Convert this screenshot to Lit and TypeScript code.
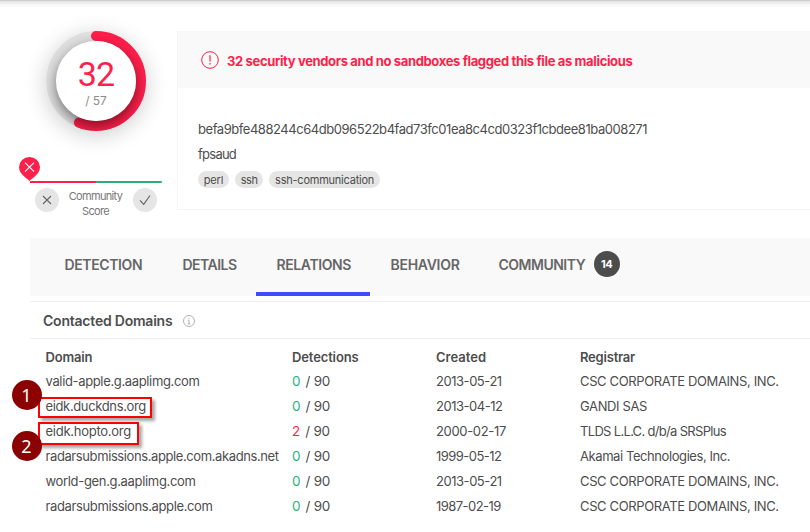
import { LitElement, html, css, nothing } from "lit";
import { customElement } from "lit/decorators.js";
import { styleMap } from "lit/directives/style-map.js";

// A label and its letter spacing in px.
type Label = [text: string, tracking: number];

interface DomainRow {
  domain: Label;
  hits: number;
  created: Label;
  registrar: Label;
}

const label = ([text, tracking]: Label, name = "label") =>
  html`<span class=${name} style=${styleMap({ letterSpacing: `${tracking}px` })}>${text}</span>`;

const TABS: Label[] = [
  ["DETECTION", -0.38],
  ["DETAILS", -0.52],
  ["RELATIONS", -0.4],
  ["BEHAVIOR", -0.28],
  ["COMMUNITY", -0.5],
];

const CHIPS: Label[] = [["perl", -0.2], ["ssh", -0.45], ["ssh-communication", -0.23]];

const HEADERS: Label[] = [
  ["Domain", -0.2],
  ["Detections", -0.13],
  ["Created", 0],
  ["Registrar", -0.21],
];

const CSC: Label = ["CSC CORPORATE DOMAINS, INC.", -0.37];

const ROWS: DomainRow[] = [
  { domain: ["valid-apple.g.aaplimg.com", -0.35], hits: 0, created: ["2013-05-21", -0.46], registrar: CSC },
  { domain: ["eidk.duckdns.org", -0.36], hits: 0, created: ["2013-04-12", -0.48], registrar: ["GANDI SAS", -0.37] },
  { domain: ["eidk.hopto.org", -0.26], hits: 2, created: ["2000-02-17", -0.33], registrar: ["TLDS L.L.C. d/b/a SRSPlus", -0.68] },
  { domain: ["radarsubmissions.apple.com.akadns.net", -0.4], hits: 0, created: ["1999-05-12", -0.53], registrar: ["Akamai Technologies, Inc.", -0.42] },
  { domain: ["world-gen.g.aaplimg.com", -0.33], hits: 0, created: ["2013-05-21", -0.46], registrar: CSC },
  { domain: ["radarsubmissions.apple.com", -0.37], hits: 0, created: ["1987-02-19", -0.55], registrar: CSC },
];

@customElement("score-card")
class ScoreCard extends LitElement {
  static styles = css`
    :host { display: block; width: 132px; text-align: center; color: #777; }
    .dial {
      position: relative; width: 100px; height: 100px; margin: 0 auto; border-radius: 50%;
      box-shadow: 0 4px 22px rgba(0, 0, 0, 0.2);
    }
    .ring { display: block; }
    .face {
      position: absolute; inset: 10px; border-radius: 50%; background: #fff;
      display: flex; flex-direction: column; align-items: center;
    }
    .count { font: 400 34px/34px Roboto, sans-serif; letter-spacing: -0.8px; color: #ff1f4b; margin-top: 16px; }
    .total { font-size: 12px; line-height: 16px; letter-spacing: -0.1px; color: #8c8c8c; margin-top: 2px; }
    .meter { position: relative; display: flex; margin-top: 50px; }
    .bar { flex: 1; height: 2px; }
    .bad { background: #ff1f4b; }
    .good { background: #26b179; border-radius: 0 1px 1px 0; }
    .pin { position: absolute; left: -11px; bottom: 2px; }
    .votes { display: flex; justify-content: space-between; padding: 5px 5px 0; }
    .vote { width: 24px; height: 24px; border-radius: 50%; background: #e5e5e5; }
    .caption { font-size: 11px; line-height: 15px; letter-spacing: -0.68px; padding-top: 0.5px; margin-left: -1px; }
    svg { display: block; }
  `;

  render() {
    const circumference = 2 * Math.PI * 45;
    const arc = (circumference * 32) / 57;
    return html`
      <div class="dial">
        <svg class="ring" width="100" height="100" viewBox="0 0 100 100">
          <defs>
            <clipPath id="disc"><circle cx="50" cy="50" r="50" /></clipPath>
            <filter id="soft" x="-50%" y="-50%" width="200%" height="200%"><feGaussianBlur stdDeviation="6.5" /></filter>
          </defs>
          <circle cx="50" cy="50" r="45" fill="none" stroke="#dfdfdf" stroke-width="10" />
          <circle cx="50" cy="50" r="45" fill="none" stroke="#ff1f4b" stroke-width="10" stroke-linecap="round"
            stroke-dasharray="${arc} ${circumference}" transform="rotate(-90 50 50)" />
          <g clip-path="url(#disc)"><circle cx="50" cy="55" r="40" fill="#000" opacity="0.5" filter="url(#soft)" /></g>
        </svg>
        <div class="face"><span class="count">32</span><span class="total">/ 57</span></div>
      </div>
      <div class="meter">
        <div class="bar bad"></div>
        <div class="bar good"></div>
        <svg class="pin" width="21" height="24" viewBox="0 0 21 24">
          <path d="M10.5 24C8.5 21.5 0 17 0 10.2a10.5 10.2 0 0 1 21 0C21 17 12.5 21.5 10.5 24Z" fill="#ff1f4b" />
          <path d="M6 5.7l9 9M15 5.7l-9 9" fill="none" stroke="#fff" stroke-width="1.1" />
        </svg>
      </div>
      <div class="votes">
        <svg class="vote" viewBox="0 0 24 24" fill="none" stroke="#666" stroke-width="1.1"><path d="M8 8l8 8M16 8l-8 8" /></svg>
        <div class="caption">Community<br />Score</div>
        <svg class="vote" viewBox="0 0 24 24" fill="none" stroke="#666" stroke-width="1.2"><path d="M7 12.3l3.7 4L17 7.5" /></svg>
      </div>
    `;
  }
}

@customElement("file-summary")
class FileSummary extends LitElement {
  static styles = css`
    :host { display: block; box-sizing: border-box; height: 179px; border: 1px solid #f4f4f4; border-width: 0 0 1px 1px; }
    .alert {
      display: flex; align-items: center; gap: 8px; height: 57px; padding-left: 23px;
      background: #f9f9f9; color: #ff1f4b; font-weight: 700; white-space: nowrap;
    }
    .icon { margin-top: 1px; }
    .text { margin-top: 2px; }
    .info { padding: 29px 0 0 20px; line-height: 25px; color: #4d4d4d; white-space: nowrap; }
    .line { height: 24.5px; }
    .chips { display: flex; gap: 6px; margin-top: 5px; font-size: 11px; line-height: 17px; }
    .chip { height: 17px; padding: 0 5.8px; border-radius: 9px; background: #e5e5e5; }
    .chip .label { display: block; line-height: 19px; }
  `;

  render() {
    return html`
      <div class="alert">
        <svg class="icon" width="18" height="18" viewBox="0 0 18 18" fill="none" stroke="#ff1f4b">
          <circle cx="9" cy="9" r="8.3" /><path d="M9 4.2v6.2M9 12v1.5" stroke-width="1.2" />
        </svg>
        ${label(["32 security vendors and no sandboxes flagged this file as malicious", -0.36], "text")}
      </div>
      <div class="info">
        <div class="line">${label(["befa9bfe488244c64db096522b4fad73fc01ea8c4cd0323f1cbdee81ba008271", -0.45])}</div>
        <div class="line">${label(["fpsaud", -0.75])}</div>
        <div class="chips">${CHIPS.map((c) => html`<div class="chip">${label(c)}</div>`)}</div>
      </div>
    `;
  }
}

@customElement("tab-strip")
class TabStrip extends LitElement {
  static styles = css`
    :host {
      display: flex; height: 58px; padding-left: 13px; background: #f9f9f9; color: #666;
      font-size: 14px; font-weight: 600; white-space: nowrap;
    }
    .tab {
      display: flex; align-items: flex-start; gap: 8.5px; box-sizing: border-box; height: 58px;
      padding: 13px 19.8px 0 20.5px; border-bottom: 4px solid transparent; line-height: 28px;
    }
    .tab:nth-child(1) { width: 118px; padding-left: 21.5px; }
    .tab:nth-child(2) { width: 95px; padding-left: 21.5px; }
    .tab:nth-child(3) { width: 114px; }
    .tab:nth-child(4) { width: 108px; }
    .current { border-color: #3b4efd; }
    .badge {
      width: 26px; height: 26px; border-radius: 50%; background: #4d4d4d; color: #fff;
      font-size: 11px; font-weight: 700; line-height: 26px; text-align: center; letter-spacing: -0.4px;
    }
  `;

  render() {
    return html`${TABS.map(
      (tab, i) => html`<div class=${i === 2 ? "tab current" : "tab"}>
        ${label(tab)}${i === 4 ? html`<span class="badge">14</span>` : nothing}
      </div>`,
    )}`;
  }
}

@customElement("domain-table")
class DomainTable extends LitElement {
  static styles = css`
    :host { display: block; margin-top: 5px; border-top: 1px solid #eee; color: #4d4d4d; white-space: nowrap; }
    .title {
      display: flex; align-items: center; gap: 11px; height: 36px; padding-left: 13px;
      border-bottom: 1px solid #eee; font-size: 14px; font-weight: 600;
    }
    .title svg { margin-top: 1px; }
    .row { display: grid; grid-template-columns: 246.5px 144px 144px 1fr; padding-left: 15.5px; line-height: 25px; height: 25px; }
    .head { font-weight: 600; height: 24px; padding-top: 6px; }
    .detections { display: flex; gap: 5px; font-size: 13.5px; }
    .clean { color: #1fb57a; }
    .flagged { color: #ff1f4b; }
    .table { position: relative; }
    .mark { position: absolute; box-sizing: border-box; height: 22px; border: 2px solid #f00; box-shadow: 3px 3px 3px rgba(0, 0, 0, 0.35); }
    .first { left: 8px; top: 58px; width: 114px; height: 21px; }
    .second { left: 8px; top: 83px; width: 101px; height: 23px; }
    .step {
      position: absolute; left: -18.5px; width: 30px; height: 30px; border-radius: 50%;
      background: #8b0000; color: #fff; font: 18px/30px "Noto Sans", sans-serif; text-align: center;
    }
    .one { top: 40.5px; }
    .two { top: 91.5px; }
  `;

  render() {
    return html`
      <div class="title">
        ${label(["Contacted Domains", -0.22])}
        <svg width="12" height="12" viewBox="0 0 12 12" fill="none" stroke="#aaa" stroke-width="0.9">
          <circle cx="6" cy="6" r="5.5" /><path d="M6 2.7v1.2M4.8 5.2H6V9M4.7 9h2.6" />
        </svg>
      </div>
      <div class="table">
        <div class="row head">${HEADERS.map((h) => label(h))}</div>
        ${ROWS.map(
          (r) => html`<div class="row">
            ${label(r.domain)}
            <span class="detections"><span class=${r.hits ? "flagged" : "clean"}>${r.hits}</span>${label(["/ 90", -0.25])}</span>
            ${label(r.created)}${label(r.registrar)}
          </div>`,
        )}
        <div class="mark first"></div>
        <div class="mark second"></div>
        <div class="step one">1</div>
        <div class="step two">2</div>
      </div>
    `;
  }
}

@customElement("app-root")
class AppRoot extends LitElement {
  static styles = css`
    :host {
      display: block; width: 810px; height: 532px; overflow: hidden; background: #fff;
      font: 400 13px Inter, "Liberation Sans", sans-serif;
    }
    .edge { height: 8px; background: linear-gradient(#c4c4c4, #e6e6e6 20%, #fafafa 70%, #fff); }
    .overview { display: grid; grid-template-columns: 132px 1fr; gap: 15px; padding: 23px 0 0 30px; height: 207px; }
    .report { padding-left: 30px; }
  `;

  render() {
    return html`
      <div class="edge"></div>
      <div class="overview"><score-card></score-card><file-summary></file-summary></div>
      <div class="report"><tab-strip></tab-strip><domain-table></domain-table></div>
    `;
  }
}
